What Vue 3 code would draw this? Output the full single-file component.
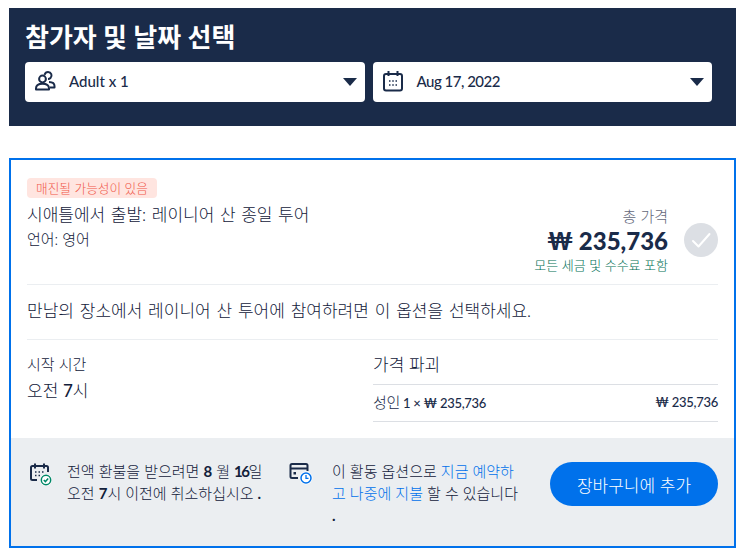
<script setup>
const breakdown = [{ qty: '1 × ₩ 235,736', price: '₩ 235,736' }];
</script>

<template>
  <div class="page">
    <section class="picker">
      <h2 class="picker-title">참가자 및 날짜 선택</h2>
      <div class="picker-row">
        <div class="select">
          <svg class="select-icon" width="22" height="22" viewBox="0 0 22 22" fill="none" stroke="#1a2b49" stroke-width="2">
            <circle cx="8.5" cy="9" r="3.4" />
            <path d="M2 19.5v-1.2c0-2.8 2.6-4.6 6.500-4.600s6.500 1.800 6.500 4.600v1.200z" stroke-linejoin="round" />
            <path d="M10.500 4.800c.6-1.700 2-2.800 3.500-2.800a3.500 3.500 0 0 1 2.500 6c-.6.6-1.500 1-2.500 1" />
            <path d="M15 12c3 .1 5.500 1.500 5.500 4v1.500H16" stroke-linejoin="round" />
          </svg>
          <span class="select-text">Adult x 1</span>
          <span class="caret"></span>
        </div>
        <div class="select">
          <svg class="select-icon" width="22" height="22" viewBox="0 0 22 22" fill="none" stroke="#1a2b49" stroke-width="2">
            <rect x="2" y="4" width="18" height="16.500" rx="2" />
            <path d="M6.500 1v5M15.500 1v5" />
            <path d="M7 11h1.500M10.250 11h1.500M13.500 11h1.500M7 15h1.500M10.250 15h1.500M13.500 15h1.500" stroke-width="1.500" />
          </svg>
          <span class="select-text date">Aug 17, 2022</span>
          <span class="caret"></span>
        </div>
      </div>
    </section>

    <section class="option">
      <div class="option-body">
        <div class="summary">
          <div class="summary-main">
            <span class="badge">매진될 가능성이 있음</span>
            <div class="option-name">시애틀에서 출발: 레이니어 산 종일 투어</div>
            <div class="option-lang">언어: 영어</div>
          </div>
          <div class="price-box">
            <div class="price-label">총 가격</div>
            <div class="price">₩ 235,736</div>
            <div class="price-note">모든 세금 및 수수료 포함</div>
          </div>
          <div class="check">
            <svg width="22" height="22" viewBox="0 0 22 22" fill="none" stroke="#fff" stroke-width="2" stroke-linecap="round" stroke-linejoin="round">
              <path d="M3 12l5.500 5.500L19.500 5" />
            </svg>
          </div>
        </div>

        <p class="meeting">만남의 장소에서 레이니어 산 투어에 참여하려면 이 옵션을 선택하세요.</p>

        <div class="details">
          <div class="start">
            <div class="start-label">시작 시간</div>
            <div class="start-value">오전 <b>7</b>시</div>
          </div>
          <div class="breakdown">
            <div class="breakdown-title">가격 파괴</div>
            <div v-for="row in breakdown" :key="row.price" class="breakdown-row">
              <span><span class="row-kr">성인</span> {{ row.qty }}</span>
              <span>{{ row.price }}</span>
            </div>
          </div>
        </div>
      </div>

      <div class="footer">
        <div class="footer-item refund">
          <svg class="footer-icon" width="24" height="26" viewBox="0 0 24 26" fill="none">
            <path d="M8 18H3.500A1.500 1.500 0 0 1 2 16.500V5.500A1.500 1.500 0 0 1 3.500 4h14A1.500 1.500 0 0 1 19 5.500V10" stroke="#1a2b49" stroke-width="2" />
            <path d="M6 1.500v5M15 1.500v5" stroke="#1a2b49" stroke-width="2" />
            <path d="M6 10h1.500M9.500 10H11M13 10h1.500M6 13.500h1.500M9.500 13.500H11" stroke="#1a2b49" stroke-width="1.500" />
            <circle cx="17" cy="18" r="6" fill="#fff" />
            <circle cx="17" cy="18" r="4.700" stroke="#008768" stroke-width="1.500" />
            <path d="M14.800 18l1.600 1.600 2.800-3" stroke="#008768" stroke-width="1.500" />
          </svg>
          <p class="footer-text refund-text">전액 환불을 받으려면 <b>8</b> 월 <b class="narrow">16</b>일 오전 <b>7</b>시 이전에 취소하십시오 <b>.</b></p>
        </div>
        <div class="footer-item later">
          <svg class="footer-icon" width="24" height="24" viewBox="0 0 24 24" fill="none">
            <path d="M9 16H3a1.500 1.500 0 0 1-1.500-1.500v-11A1.500 1.500 0 0 1 3 2h14a1.500 1.500 0 0 1 1.500 1.500V9" stroke="#1a2b49" stroke-width="2" />
            <path d="M2 6.500h16" stroke="#1a2b49" stroke-width="2" />
            <rect x="4.500" y="10" width="2.500" height="2.500" fill="#1a2b49" />
            <circle cx="17" cy="16" r="6.500" fill="#fff" />
            <circle cx="17" cy="16" r="5" stroke="#0071eb" stroke-width="1.500" />
            <path d="M17 13v3.300h2.500" stroke="#0071eb" stroke-width="1.300" />
          </svg>
          <p class="footer-text later-text">이 활동 옵션으로 <a class="link">지금 예약하고 나중에 지불</a> 할 수 있습니다 <b>.</b></p>
        </div>
        <button class="add-btn">장바구니에 추가</button>
      </div>
    </section>
  </div>
</template>

<style>
body {
  margin: 0;
  background: #fff;
}
</style>

<style scoped>
.page {
  width: 747px;
  height: 558px;
  box-sizing: border-box;
  padding: 8px 11px 0 9px;
  overflow: hidden;
  font-family: "Lato", "Noto Sans CJK KR", sans-serif;
  color: #1a2b49;
}

.picker {
  height: 118px;
  box-sizing: border-box;
  padding: 12px 24px 0 16px;
  background: #1a2b49;
}

.picker-title {
  margin: 0;
  height: 42px;
  line-height: 34px;
  font-size: 26px;
  font-weight: 700;
  color: #fff;
}

.picker-row {
  display: flex;
  gap: 8px;
}

.select {
  flex: 1;
  height: 40px;
  display: flex;
  align-items: center;
  padding: 0 8px 0 9px;
  background: #fff;
  border-radius: 4px;
}

.select-icon {
  flex: none;
  margin-top: -2px;
}

.select-text {
  margin-left: 13px;
  margin-top: -2px;
  font-size: 15px;
  font-weight: 500;
}

.date {
  letter-spacing: -0.5px;
}

.caret {
  margin-left: auto;
  width: 0;
  height: 0;
  border-left: 7px solid transparent;
  border-right: 7px solid transparent;
  border-top: 8px solid #1a2b49;
}

.option {
  margin-top: 32px;
  height: 390px;
  box-sizing: border-box;
  display: flex;
  flex-direction: column;
  border: 2px solid #0071eb;
}

.option-body {
  flex: 1;
  padding: 18px 16px 0;
}

.summary {
  display: flex;
  height: 107px;
  box-sizing: border-box;
  border-bottom: 1px solid #ebeef1;
}

.summary-main {
  flex: 1;
  display: flex;
  flex-direction: column;
  align-items: flex-start;
}

.badge {
  height: 20px;
  line-height: 20px;
  padding: 0 9px;
  border-radius: 4px;
  background: #ffe5e0;
  color: #f0584a;
  font-size: 12.700px;
  font-weight: 300;
}

.option-name {
  margin-top: 5px;
  line-height: 24px;
  font-size: 17px;
  font-weight: 300;
  color: #12203a;
  word-spacing: 1px;
}

.option-lang {
  line-height: 24px;
  font-size: 15px;
  font-weight: 300;
  color: #12203a;
}

.price-box {
  padding-top: 28px;
  text-align: right;
}

.price-label {
  line-height: 20px;
  font-size: 15px;
  font-weight: 300;
  color: #63687a;
}

.price {
  line-height: 30px;
  font-size: 24px;
  font-weight: 900;
}

.price-note {
  line-height: 18px;
  font-size: 13px;
  font-weight: 300;
  color: #006f55;
}

.check {
  flex: none;
  width: 34px;
  height: 34px;
  margin: 45px 0 0 16px;
  display: flex;
  align-items: center;
  justify-content: center;
  border-radius: 50%;
  background: #dcdfe4;
}

.meeting {
  margin: 0;
  height: 55px;
  box-sizing: border-box;
  line-height: 52px;
  border-bottom: 1px solid #ebeef1;
  font-size: 17px;
  font-weight: 300;
  color: #12203a;
  word-spacing: 1.200px;
}

.details {
  display: flex;
  padding-top: 12px;
}

.start {
  width: 346px;
  font-weight: 300;
  color: #12203a;
}

.start-label {
  line-height: 24px;
  font-size: 15px;
}

.start-value {
  margin-top: 3px;
  line-height: 24px;
  font-size: 17px;
}

.start-value b {
  font-weight: 500;
}

.breakdown {
  flex: 1;
}

.breakdown-title {
  height: 32px;
  line-height: 26px;
  font-size: 17px;
  font-weight: 300;
  color: #12203a;
  border-bottom: 1px solid #dcdfe4;
}

.breakdown-row {
  display: flex;
  justify-content: space-between;
  height: 36px;
  line-height: 34px;
  font-size: 13px;
  font-weight: 500;
  letter-spacing: -0.3px;
  border-bottom: 1px solid #dcdfe4;
}

.row-kr {
  font-size: 15px;
  font-weight: 300;
}

.footer {
  height: 108px;
  box-sizing: border-box;
  display: flex;
  align-items: flex-start;
  padding: 24px 16px 0 18px;
  background: #ebeef1;
}

.footer-item {
  display: flex;
}

.refund {
  width: 260px;
}

.later {
  width: 243px;
}

.footer-icon {
  flex: none;
}

.footer-text {
  margin: -2px 0 0;
  line-height: 22px;
  font-size: 15px;
  font-weight: 300;
  color: #12203a;
  word-break: break-all;
}

.refund-text {
  margin-left: 14px;
  width: 200px;
  flex: none;
}

.later-text {
  margin-left: 19px;
  width: 192px;
  flex: none;
}

.footer-text b {
  font-weight: 700;
}

.footer-text b.narrow {
  letter-spacing: -1.500px;
}

.link {
  color: #0071eb;
}

.add-btn {
  margin: 0 0 0 auto;
  width: 168px;
  height: 44px;
  border: 0;
  border-radius: 22px;
  background: #0071eb;
  color: #fff;
  font-family: inherit;
  font-size: 17px;
  font-weight: 300;
}
</style>
